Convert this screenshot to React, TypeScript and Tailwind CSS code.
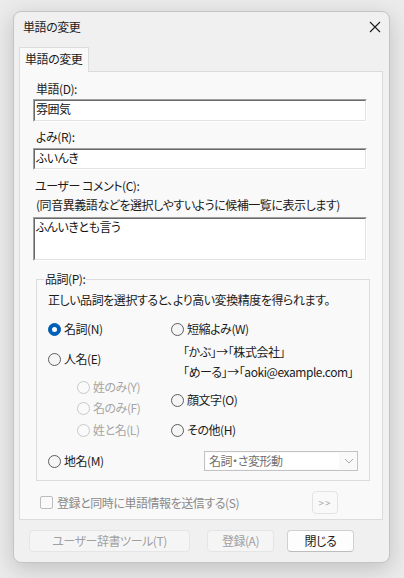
import React from 'react';

const jp = "font-['Noto_Sans_CJK_JP','Noto_Sans',sans-serif] [font-feature-settings:'palt'] text-[12px] leading-[16px] tracking-[-0.45px]";

type RadioProps = {
  label: string;
  checked?: boolean;
  disabled?: boolean;
};

function Radio({ label, checked = false, disabled = false }: RadioProps) {
  const ring = checked
    ? 'border-[#005fb8] bg-[#005fb8]'
    : disabled
      ? 'border-[#c8c8c8] bg-[#fafafa]'
      : 'border-[#5d5d5d] bg-[#f5f5f5]';

  return (
    <div className="flex h-[20px] items-center gap-[3px]">
      <span className={`flex h-[13px] w-[13px] shrink-0 items-center justify-center rounded-full border ${ring}`}>
        {checked && <span className="h-[5px] w-[5px] rounded-full bg-white" />}
      </span>
      <span className={disabled ? 'text-[#a6a6a6]' : 'text-[#1b1b1b]'}>{label}</span>
    </div>
  );
}

// classic sunken edit box: two-tone outer and inner borders
function Sunken({ className = '', children }: { className?: string; children?: React.ReactNode }) {
  return (
    <div className={`border border-t-[#a0a0a0] border-l-[#a0a0a0] border-r-white border-b-white ${className}`}>
      <div className="h-full border border-t-[#696969] border-l-[#696969] border-r-[#e3e3e3] border-b-[#e3e3e3] bg-white px-[1px] text-[#111]">
        {children}
      </div>
    </div>
  );
}

function Button({ label, disabled = false, className = '' }: { label: string; disabled?: boolean; className?: string }) {
  return (
    <button
      className={`flex h-[22px] items-center justify-center rounded-[4px] border ${
        disabled
          ? 'border-[#e5e5e5] bg-[#f5f5f5] text-[#a0a0a0]'
          : 'border-[#d0d0d0] border-b-[#bdbdbd] bg-[#fdfdfd] text-[#1b1b1b]'
      } ${className}`}
    >
      {label}
    </button>
  );
}

export default function App() {
  return (
    <div className={`h-[578px] w-[404px] bg-[#ebebeb] pl-[13px] pt-[11px] ${jp}`}>
      <div className="flex h-[552px] w-[377px] flex-col rounded-[8px] border border-[#c4c4c4] bg-[#f0f0f0] shadow-[0_6px_22px_rgba(0,0,0,0.18)]">
        {/* title bar */}
        <div className="flex h-[35px] items-start justify-between pl-[9px] pr-[8px] pt-[7px]">
          <span className="text-[#1b1b1b]">単語の変更</span>
          <svg width="12" height="12" viewBox="0 0 12 12" className="mt-[2px]">
            <path d="M1 1 L11 11 M11 1 L1 11" stroke="#1b1b1b" strokeWidth="1.1" fill="none" />
          </svg>
        </div>

        {/* tab header */}
        <div className="relative z-10 -mb-[1px] ml-[5px] h-[25px] w-[70px] border border-b-0 border-[#dcdcdc] bg-[#f9f9f9] pl-[5px] pt-[3px] text-[#1b1b1b]">
          単語の変更
        </div>

        {/* tab page */}
        <div className="ml-[5px] w-[364px] border border-[#dcdcdc] bg-[#f9f9f9] pb-[5px] pl-[13px] pt-[9px] text-[#1b1b1b]">
          <div className="pl-[3px]">単語(D):</div>
          <Sunken className="mt-[2px] h-[23px] w-[334px]">雰囲気</Sunken>

          <div className="mt-[7px] pl-[3px]">よみ(R):</div>
          <Sunken className="mt-[3px] h-[22px] w-[334px]">ふいんき</Sunken>

          <div className="mt-[8px] pl-[2px]">ユーザー コメント(C):</div>
          <div className="mt-[3px] pl-[3px]">(同音異義語などを選択しやすいように候補一覧に表示します)</div>
          <Sunken className="mt-[4px] h-[44px] w-[334px]">ふんいきとも言う</Sunken>

          {/* part of speech group */}
          <div className="relative ml-[3px] mt-[18px] w-[334px] border border-[#dcdcdc] pb-[9px] pl-[11px] pt-[12px]">
            <span className="absolute -top-[9px] left-[7px] bg-[#f9f9f9] px-[1px]">品詞(P):</span>
            <div>正しい品詞を選択すると、より高い変換精度を得られます。</div>

            <div className="mt-[11px] flex">
              <div className="w-[123px]">
                <Radio label="名詞(N)" checked />
                <div className="mt-[10px]">
                  <Radio label="人名(E)" />
                </div>
                <div className="ml-[29px] mt-[8px]">
                  <Radio label="姓のみ(Y)" disabled />
                  <div className="mt-[1px]">
                    <Radio label="名のみ(F)" disabled />
                  </div>
                  <div className="mt-[2px]">
                    <Radio label="姓と名(L)" disabled />
                  </div>
                </div>
              </div>
              <div>
                <Radio label="短縮よみ(W)" />
                <div className="ml-[12px] mt-[3px]">
                  <div className="flex h-[20px] items-center">「かぶ」→「株式会社」</div>
                  <div className="flex h-[20px] items-center">「めーる」→「aoki@example.com」</div>
                </div>
                <div className="mt-[8px]">
                  <Radio label="顔文字(O)" />
                </div>
                <div className="mt-[10px]">
                  <Radio label="その他(H)" />
                </div>
              </div>
            </div>

            <div className="mt-[11px] flex items-center">
              <div className="w-[156px]">
                <Radio label="地名(M)" />
              </div>
              <div className="flex h-[20px] w-[154px] items-center border border-[#c3c3c3] bg-[#f9f9f9] p-[1px]">
                <div className="flex h-full w-[133px] items-center bg-white pl-[3px] text-[#6f6f6f]">名詞・さ変形動</div>
                <svg width="10" height="6" viewBox="0 0 10 6" className="ml-[5px]">
                  <path d="M1 1 L5 5 L9 1" stroke="#a8a8a8" strokeWidth="1" fill="none" />
                </svg>
              </div>
            </div>
          </div>

          <div className="mt-[10px] flex h-[23px] items-center pl-[7px] pr-[44px]">
            <span className="h-[13px] w-[13px] rounded-[2px] border border-[#bcbcbc] bg-[#fafafa]" />
            <span className="ml-[4px] text-[#8a8a8a]">登録と同時に単語情報を送信する(S)</span>
            <span className="ml-auto flex h-[23px] w-[26px] items-center justify-center rounded-[4px] border border-[#e3e3e3] text-[10px] tracking-[1px] text-[#a8a8a8]">
              &gt;&gt;
            </span>
          </div>
        </div>

        {/* dialog buttons */}
        <div className="ml-[15px] mt-[10px] flex items-center">
          <Button label="ユーザー辞書ツール(T)" disabled className="w-[161px]" />
          <Button label="登録(A)" disabled className="ml-[17px] w-[67px]" />
          <Button label="閉じる" className="ml-[13px] w-[67px]" />
        </div>
      </div>
    </div>
  );
}
